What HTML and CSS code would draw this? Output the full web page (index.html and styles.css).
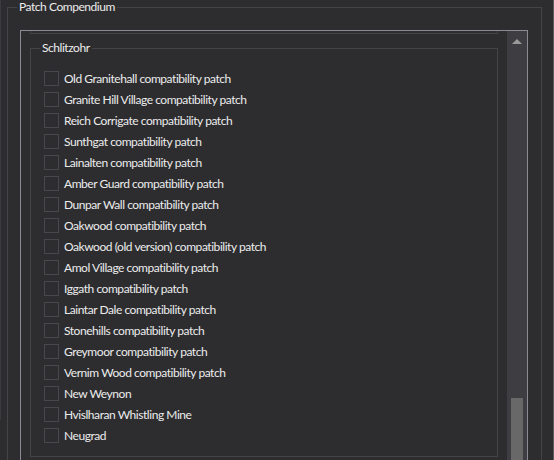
FILE: index.html
```html
<!DOCTYPE html>
<html lang="en">
<head>
    <meta charset="UTF-8">
    <meta name="viewport" content="width=device-width, initial-scale=1.0">
    <title>Patch Compendium</title>
    <link rel="stylesheet" href="styles.css">
</head>
<body>
    <div class="edge-left"></div>

    <!-- Outer group -->
    <div class="group outer">
        <span class="legend">Patch Compendium</span>

        <div class="scroll-area">
            <div class="scroll-content">
                <div class="prev-group"></div>

                <div class="group inner">
                    <span class="legend">Schlitzohr</span>
                    <div class="list" id="patchList"></div>
                </div>
            </div>
            <div class="scrollbar">
                <div class="arrow-up"></div>
                <div class="thumb"></div>
            </div>
        </div>
    </div>

    <div class="edge-right"></div>

    <script>
var patches = [
    "Old Granitehall compatibility patch",
    "Granite Hill Village compatibility patch",
    "Reich Corrigate compatibility patch",
    "Sunthgat compatibility patch",
    "Lainalten compatibility patch",
    "Amber Guard compatibility patch",
    "Dunpar Wall compatibility patch",
    "Oakwood compatibility patch",
    "Oakwood (old version) compatibility patch",
    "Amol Village compatibility patch",
    "Iggath compatibility patch",
    "Laintar Dale compatibility patch",
    "Stonehills compatibility patch",
    "Greymoor compatibility patch",
    "Vernim Wood compatibility patch",
    "New Weynon",
    "Hvislharan Whistling Mine",
    "Neugrad"
];

var list = document.getElementById('patchList');
patches.forEach(function(name) {
    var row = document.createElement('label');
    row.className = 'row';
    row.innerHTML = '<span class="check"></span><span class="text"></span>';
    row.querySelector('.text').innerText = name;
    list.appendChild(row);
});
    </script>
</body>
</html>
```

FILE: styles.css
```css
body {
    margin: 0;
    height: 460px;
    overflow: hidden;
    display: flex;
    align-items: flex-start;
    background-color: #2d2d30;
    font-family: "Segoe UI", Lato, sans-serif;
    font-size: 12px;
    letter-spacing: -0.45px;
    color: #ececec;
}

.edge-left {
    width: 1px;
    height: 420px;
    background-color: #3b3b3f;
    flex-shrink: 0;
}

.edge-right {
    width: 1px;
    height: 460px;
    margin-left: 11px;
    background-color: #5c5c5e;
    flex-shrink: 0;
}

.group {
    position: relative;
    border: 1px solid #444447;
    box-sizing: border-box;
}

.legend {
    position: absolute;
    top: -8px;
    padding: 0 2px;
    line-height: 14px;
    background-color: #2d2d30;
    white-space: nowrap;
}

/* Patch Compendium */
.outer {
    margin: 7px 0 0 6px;
    width: 535px;
    height: 460px;
    border-bottom: none;
    padding: 22px 13px 0 12px;
    flex-shrink: 0;
}

.outer .legend {
    left: 9px;
}

.scroll-area {
    display: flex;
    height: 430px;
    border: 1px solid #898c93;
    border-bottom: none;
}

.scroll-content {
    flex: 1;
    overflow: hidden;
}

.prev-group {
    margin-left: 9px;
    width: 468px;
    height: 3px;
    box-sizing: border-box;
    border: 1px solid #444447;
    border-top: none;
}

/* Schlitzohr */
.inner {
    margin: 14px 0 0 9px;
    width: 468px;
    height: 409px;
    padding: 19px 0 0 13px;
}

.inner .legend {
    left: 9px;
}

.row {
    display: flex;
    align-items: center;
    height: 21px;
}

.check {
    width: 15px;
    height: 15px;
    box-sizing: border-box;
    border: 1px solid #48484c;
    margin-right: 5px;
    flex-shrink: 0;
}

.scrollbar {
    width: 20px;
    background-color: #3e3e42;
    display: flex;
    flex-direction: column;
    align-items: center;
}

.arrow-up {
    margin-top: 8px;
    width: 0;
    height: 0;
    border-left: 5px solid transparent;
    border-right: 5px solid transparent;
    border-bottom: 5px solid #999999;
}

.thumb {
    margin-top: 354px;
    width: 12px;
    flex: 1;
    background-color: #686868;
}
```
